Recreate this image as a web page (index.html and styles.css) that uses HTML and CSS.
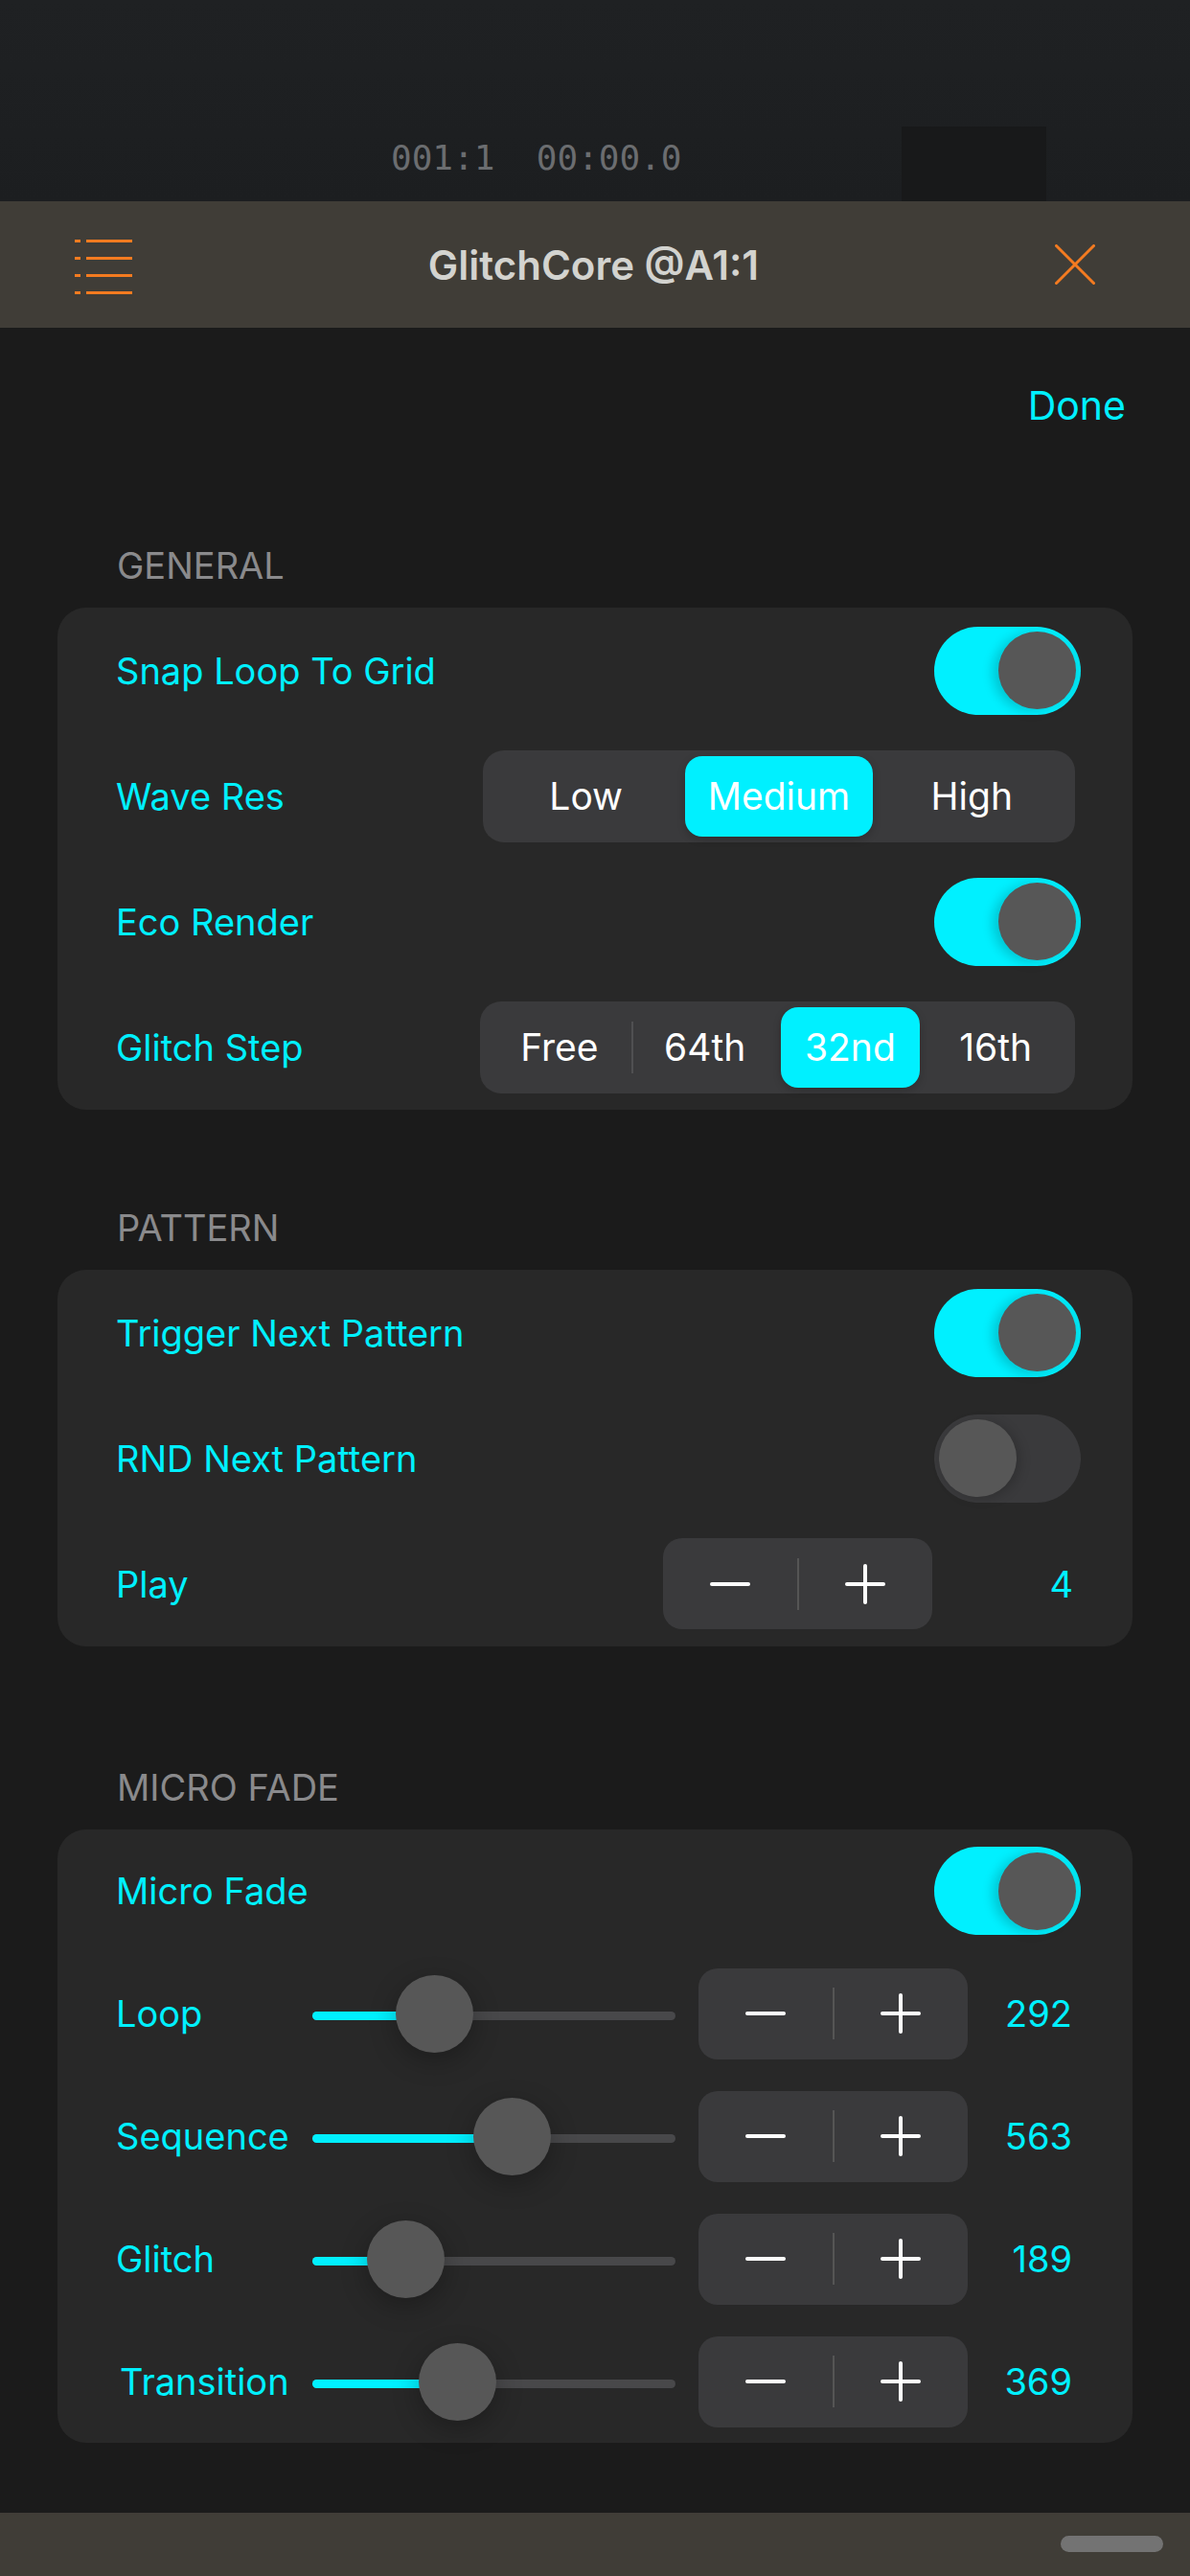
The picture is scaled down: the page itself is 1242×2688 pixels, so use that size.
FILE: index.html
```html
<!DOCTYPE html>
<html lang="en">
<head>
    <meta charset="UTF-8">
    <meta name="viewport" content="width=device-width, initial-scale=1.0">
    <title>GlitchCore Settings</title>
    <link rel="stylesheet" href="styles.css">
</head>
<body>
    <!-- Transport strip behind the sheet -->
    <div class="transport">
        <span class="timecode">001:1  00:00.0</span>
        <div class="transport-box"></div>
    </div>

    <!-- Title bar -->
    <header class="titlebar">
        <svg class="menu-icon" width="60" height="57" viewBox="0 0 60 57">
            <rect x="0" y="0" width="6" height="3" />
            <rect x="12" y="0" width="48" height="3" />
            <rect x="0" y="18" width="6" height="3" />
            <rect x="12" y="18" width="48" height="3" />
            <rect x="0" y="36" width="6" height="3" />
            <rect x="12" y="36" width="48" height="3" />
            <rect x="0" y="54" width="6" height="3" />
            <rect x="12" y="54" width="48" height="3" />
        </svg>
        <h1>GlitchCore @A1:1</h1>
        <svg class="close-icon" width="42" height="42" viewBox="0 0 42 42">
            <line x1="1.5" y1="1.5" x2="40.5" y2="40.5" />
            <line x1="40.5" y1="1.5" x2="1.5" y2="40.5" />
        </svg>
    </header>

    <main class="sheet">
        <div class="done-bar"><span class="done">Done</span></div>

        <!-- General -->
        <section class="group general">
            <h2 class="group-title">GENERAL</h2>
            <div class="card">
                <div class="row">
                    <span class="label">Snap Loop To Grid</span>
                    <span class="toggle on"><span class="knob"></span></span>
                </div>
                <div class="row">
                    <span class="label">Wave Res</span>
                    <div class="segmented wave-seg">
                        <span class="segment">Low</span>
                        <span class="segment active">Medium</span>
                        <span class="segment">High</span>
                    </div>
                </div>
                <div class="row">
                    <span class="label">Eco Render</span>
                    <span class="toggle on"><span class="knob"></span></span>
                </div>
                <div class="row">
                    <span class="label">Glitch Step</span>
                    <div class="segmented glitch-seg">
                        <span class="segment divided">Free</span>
                        <span class="segment">64th</span>
                        <span class="segment active">32nd</span>
                        <span class="segment">16th</span>
                    </div>
                </div>
            </div>
        </section>

        <!-- Pattern -->
        <section class="group pattern">
            <h2 class="group-title">PATTERN</h2>
            <div class="card">
                <div class="row">
                    <span class="label">Trigger Next Pattern</span>
                    <span class="toggle on"><span class="knob"></span></span>
                </div>
                <div class="row">
                    <span class="label">RND Next Pattern</span>
                    <span class="toggle off"><span class="knob"></span></span>
                </div>
                <div class="row">
                    <span class="label">Play</span>
                    <div class="stepper">
                        <span class="step"><svg width="42" height="42" viewBox="0 0 42 42"><line x1="2" y1="21" x2="40" y2="21" /></svg></span>
                        <span class="sep"></span>
                        <span class="step"><svg width="42" height="42" viewBox="0 0 42 42"><line x1="2" y1="21" x2="40" y2="21" /><line x1="21" y1="2" x2="21" y2="40" /></svg></span>
                    </div>
                    <span class="value wide">4</span>
                </div>
            </div>
        </section>

        <!-- Micro fade -->
        <section class="group micro">
            <h2 class="group-title">MICRO FADE</h2>
            <div class="card">
                <div class="row">
                    <span class="label">Micro Fade</span>
                    <span class="toggle on"><span class="knob"></span></span>
                </div>
                <div class="row">
                    <span class="label fixed">Loop</span>
                    <div class="slider">
                        <span class="track"></span>
                        <span class="fill" style="width: 127px"></span>
                        <span class="thumb" style="left: 87px"></span>
                    </div>
                    <div class="stepper">
                        <span class="step"><svg width="42" height="42" viewBox="0 0 42 42"><line x1="2" y1="21" x2="40" y2="21" /></svg></span>
                        <span class="sep"></span>
                        <span class="step"><svg width="42" height="42" viewBox="0 0 42 42"><line x1="2" y1="21" x2="40" y2="21" /><line x1="21" y1="2" x2="21" y2="40" /></svg></span>
                    </div>
                    <span class="value">292</span>
                </div>
                <div class="row">
                    <span class="label fixed">Sequence</span>
                    <div class="slider">
                        <span class="track"></span>
                        <span class="fill" style="width: 208px"></span>
                        <span class="thumb" style="left: 168px"></span>
                    </div>
                    <div class="stepper">
                        <span class="step"><svg width="42" height="42" viewBox="0 0 42 42"><line x1="2" y1="21" x2="40" y2="21" /></svg></span>
                        <span class="sep"></span>
                        <span class="step"><svg width="42" height="42" viewBox="0 0 42 42"><line x1="2" y1="21" x2="40" y2="21" /><line x1="21" y1="2" x2="21" y2="40" /></svg></span>
                    </div>
                    <span class="value">563</span>
                </div>
                <div class="row">
                    <span class="label fixed">Glitch</span>
                    <div class="slider">
                        <span class="track"></span>
                        <span class="fill" style="width: 97px"></span>
                        <span class="thumb" style="left: 57px"></span>
                    </div>
                    <div class="stepper">
                        <span class="step"><svg width="42" height="42" viewBox="0 0 42 42"><line x1="2" y1="21" x2="40" y2="21" /></svg></span>
                        <span class="sep"></span>
                        <span class="step"><svg width="42" height="42" viewBox="0 0 42 42"><line x1="2" y1="21" x2="40" y2="21" /><line x1="21" y1="2" x2="21" y2="40" /></svg></span>
                    </div>
                    <span class="value">189</span>
                </div>
                <div class="row">
                    <span class="label fixed indent">Transition</span>
                    <div class="slider">
                        <span class="track"></span>
                        <span class="fill" style="width: 151px"></span>
                        <span class="thumb" style="left: 111px"></span>
                    </div>
                    <div class="stepper">
                        <span class="step"><svg width="42" height="42" viewBox="0 0 42 42"><line x1="2" y1="21" x2="40" y2="21" /></svg></span>
                        <span class="sep"></span>
                        <span class="step"><svg width="42" height="42" viewBox="0 0 42 42"><line x1="2" y1="21" x2="40" y2="21" /><line x1="21" y1="2" x2="21" y2="40" /></svg></span>
                    </div>
                    <span class="value">369</span>
                </div>
            </div>
        </section>
    </main>

    <footer class="bottom-bar"><span class="home-indicator"></span></footer>
</body>
</html>
```

FILE: styles.css
```css
body {
    margin: 0;
    width: 1242px;
    background-color: #1b1b1b;
    font-family: Inter, "Noto Sans", sans-serif;
    color: #00f0ff;
}

/* Transport */
.transport {
    height: 210px;
    display: flex;
    align-items: flex-end;
    background: linear-gradient(#1f2123, #1c1e20);
}

.timecode {
    margin-left: 408px;
    margin-bottom: 27px;
    font-family: "DejaVu Sans Mono", monospace;
    font-size: 36px;
    line-height: 36px;
    color: #6b6d70;
    white-space: pre;
}

.transport-box {
    margin-left: 230px;
    width: 151px;
    height: 78px;
    background-color: #18191a;
}

/* Title bar */
.titlebar {
    height: 132px;
    display: flex;
    align-items: center;
    background-color: #403d37;
}

.menu-icon {
    margin-left: 78px;
    margin-top: 5px;
    fill: #f47b20;
}

.titlebar h1 {
    flex: 1;
    margin: 0;
    text-align: center;
    font-size: 42px;
    font-weight: 600;
    color: #d3d3cf;
}

.close-icon {
    margin-right: 99px;
    stroke: #f47b20;
    stroke-width: 3;
    stroke-linecap: round;
}

/* Sheet */
.done-bar {
    height: 162px;
    display: flex;
    align-items: center;
    justify-content: flex-end;
    padding-right: 67px;
}

.done {
    font-size: 41px;
    color: #00f0ff;
}

.group-title {
    margin: 0 0 22px 122px;
    height: 44px;
    line-height: 44px;
    font-size: 38px;
    font-weight: 400;
    color: #8a8a8c;
}

.general { margin-top: 64px; }
.pattern { margin-top: 101px; }
.micro { margin-top: 125px; }

.card {
    margin: 0 60px;
    background-color: #282828;
    border-radius: 30px;
}

.row {
    height: 131px;
    display: flex;
    align-items: center;
    padding: 0 54px 0 61px;
}

.micro .row {
    height: 128px;
}

.label {
    flex: 1;
    font-size: 38px;
    color: #00f0ff;
}

.label.fixed {
    flex: none;
    width: 205px;
}

.label.indent {
    padding-left: 4px;
    box-sizing: border-box;
}

/* Toggle */
.toggle {
    width: 153px;
    height: 92px;
    padding: 0 5px;
    box-sizing: border-box;
    border-radius: 46px;
    display: flex;
    align-items: center;
}

.toggle.on {
    background: linear-gradient(90deg, #00f0ff 80%, #00e2ee);
    justify-content: flex-end;
}

.toggle.off {
    background-color: #3a3a3c;
    justify-content: flex-start;
}

.knob {
    width: 81px;
    height: 81px;
    border-radius: 50%;
    background-color: #575757;
    box-shadow: -6px 2px 12px rgba(0, 0, 0, 0.18);
}

.toggle.off .knob {
    box-shadow: 4px 2px 12px rgba(0, 0, 0, 0.18);
}

/* Segmented control */
.segmented {
    flex: none;
    display: flex;
    height: 96px;
    padding: 6px 7px;
    margin-right: 6px;
    box-sizing: border-box;
    border-radius: 22px;
    background-color: #3a3a3c;
}

.wave-seg {
    width: 618px;
}

.glitch-seg {
    width: 621px;
}

.segment {
    flex: 1;
    margin: 0 3px;
    position: relative;
    display: flex;
    align-items: center;
    justify-content: center;
    border-radius: 18px;
    font-size: 39px;
    color: #fff;
}

.segment.active {
    background-color: #00f0ff;
    box-shadow: 0 3px 8px rgba(0, 0, 0, 0.2);
}

.segment.divided::after {
    content: "";
    position: absolute;
    right: -4px;
    top: 15px;
    width: 2px;
    height: 54px;
    background-color: #505052;
}

/* Stepper */
.stepper {
    flex: none;
    width: 281px;
    height: 95px;
    display: flex;
    align-items: center;
    border-radius: 20px;
    background-color: #3a3a3c;
}

.step {
    flex: 1;
    display: flex;
    align-items: center;
    justify-content: center;
}

.step svg {
    stroke: #fff;
    stroke-width: 4;
    stroke-linecap: round;
}

.sep {
    width: 2px;
    height: 54px;
    background-color: #555;
}

.value {
    width: 117px;
    padding-right: 8px;
    box-sizing: border-box;
    text-align: right;
    font-size: 38px;
    color: #00f0ff;
}

.value.wide {
    width: 155px;
}

/* Slider */
.slider {
    flex: none;
    position: relative;
    width: 379px;
    height: 81px;
    margin-right: 24px;
}

.track,
.fill {
    position: absolute;
    left: 0;
    top: 38px;
    height: 9px;
    border-radius: 5px;
}

.track {
    right: 0;
    background-color: #48484a;
}

.fill {
    background-color: #00f0ff;
}

.thumb {
    position: absolute;
    top: 0;
    width: 81px;
    height: 81px;
    border-radius: 50%;
    background-color: #575757;
    box-shadow: 0 8px 28px rgba(0, 0, 0, 0.28);
}

/* Bottom bar */
.bottom-bar {
    margin-top: 73px;
    height: 66px;
    display: flex;
    justify-content: flex-end;
    align-items: flex-start;
    padding: 24px 28px 0 0;
    box-sizing: border-box;
    background-color: #403d37;
}

.home-indicator {
    width: 107px;
    height: 17px;
    border-radius: 9px;
    background-color: #737373;
}
```
